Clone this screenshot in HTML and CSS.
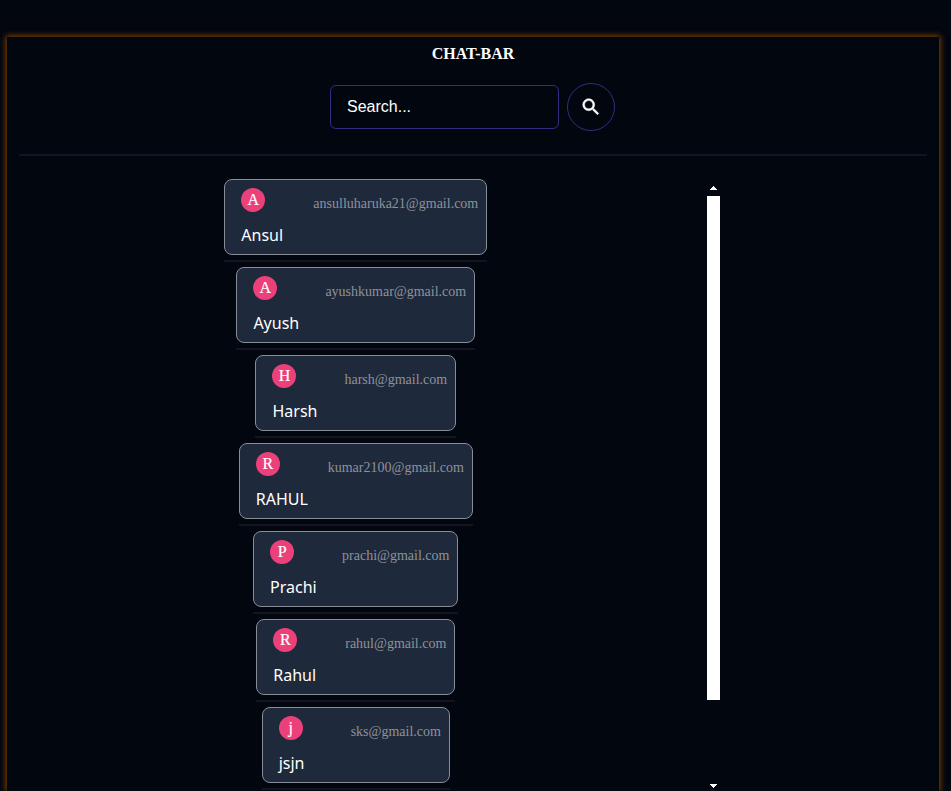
FILE: index.html
```html
<!DOCTYPE html>
<html lang="en">
<head>
<meta charset="utf-8">
<title>Chat-Bar</title>
<link rel="stylesheet" href="styles.css">
</head>
<body>
<main class="panel">
  <h1 class="title">CHAT-BAR</h1>
  <form class="search">
    <input class="search-input" type="text" placeholder="Search..." aria-label="Search">
    <button class="search-button" type="button" aria-label="Search">
      <svg viewBox="0 0 24 24" width="22" height="22" fill="currentColor" stroke="currentColor" stroke-width=".5"><path d="M15.5 14h-.79l-.28-.27C15.41 12.59 16 11.11 16 9.5 16 5.91 13.09 3 9.5 3S3 5.91 3 9.5 5.91 16 9.5 16c1.61 0 3.09-.59 4.23-1.57l.27.28v.79l5 4.99L20.49 19l-4.99-5zm-6 0C7.01 14 5 11.99 5 9.5S7.01 5 9.5 5 14 7.01 14 9.5 11.99 14 9.5 14z"/></svg>
    </button>
  </form>
  <hr class="rule">
  <div class="chats">
    <ul class="list">
      <li class="item"><div class="card"><div class="row"><span class="avatar">A</span><span class="email">ansulluharuka21@gmail.com</span></div><p class="name">Ansul</p></div><hr class="rule"></li>
      <li class="item"><div class="card"><div class="row"><span class="avatar">A</span><span class="email">ayushkumar@gmail.com</span></div><p class="name">Ayush</p></div><hr class="rule"></li>
      <li class="item"><div class="card"><div class="row"><span class="avatar">H</span><span class="email">harsh@gmail.com</span></div><p class="name">Harsh</p></div><hr class="rule"></li>
      <li class="item"><div class="card"><div class="row"><span class="avatar">R</span><span class="email">kumar2100@gmail.com</span></div><p class="name">RAHUL</p></div><hr class="rule"></li>
      <li class="item"><div class="card"><div class="row"><span class="avatar">P</span><span class="email">prachi@gmail.com</span></div><p class="name">Prachi</p></div><hr class="rule"></li>
      <li class="item"><div class="card"><div class="row"><span class="avatar">R</span><span class="email">rahul@gmail.com</span></div><p class="name">Rahul</p></div><hr class="rule"></li>
      <li class="item"><div class="card"><div class="row"><span class="avatar">j</span><span class="email">sks@gmail.com</span></div><p class="name">jsjn</p></div><hr class="rule"></li>
    </ul>
    <div class="scrollbar">
      <svg width="7" height="4" viewBox="0 0 7 4" fill="#fff" shape-rendering="crispEdges"><path d="M3 0h1v1h1v1h1v1h1v1H0V3h1V2h1V1h1z"/></svg>
      <div class="thumb"></div>
      <svg width="7" height="4" viewBox="0 0 7 4" fill="#fff" shape-rendering="crispEdges"><path d="M0 0h7v1H6v1H5v1H4v1H3V3H2V2H1V1H0z"/></svg>
    </div>
  </div>
</main>
</body>
</html>
```
FILE: styles.css
```css
* {
  box-sizing: border-box;
}

html {
  height: 100%;
  overflow: hidden;
}

body {
  height: 100%;
  margin: 0;
  padding: 37px 12px 0 7px;
  overflow: hidden;
  background: #02060f;
  color: #fff;
  font-family: "Liberation Serif", serif;
}

.panel {
  height: 754px;
  padding: 8px 12px 0;
  background: #02060f;
  box-shadow: 0 0 6px 1px #8a4600;
}

.title {
  margin: 0;
  font-size: 16px;
  line-height: 18px;
  text-align: center;
}

.search {
  display: flex;
  justify-content: center;
  align-items: center;
  gap: 8px;
  margin: 20px 1px 23px 0;
}

.search-input {
  width: 229px;
  height: 44px;
  padding: 0 16px;
  border: 1px solid #312e81;
  border-radius: 6px;
  background: transparent;
  font: 16px "Liberation Sans", sans-serif;
}

.search-input::placeholder {
  color: #fff;
}

.search-button {
  display: grid;
  place-items: center;
  width: 48px;
  height: 48px;
  padding: 0;
  border: 1px solid #312e81;
  border-radius: 50%;
  background: transparent;
  color: #fff;
}

.rule {
  height: 2px;
  margin: 0;
  border: 0;
  background: #12151f;
}

.chats {
  display: flex;
  gap: 219.7px;
  margin: 23px 0 0 205.3px;
}

.list {
  display: flex;
  flex-direction: column;
  align-items: center;
  gap: 5px;
  width: 263px;
  margin: 0;
  padding: 0;
  list-style: none;
}

.item {
  display: flex;
  flex-direction: column;
  gap: 5px;
}

.card {
  height: 76px;
  padding: 8px 8px 0 16px;
  border: 1px solid #888d97;
  border-radius: 8px;
  background: #1e293b;
}

.row {
  display: flex;
  gap: 48px;
}

.avatar {
  width: 24px;
  height: 24px;
  border-radius: 50%;
  background: #ec407a;
  font-size: 16px;
  line-height: 24px;
  text-align: center;
  -webkit-text-stroke: 0.2px #fff;
}

.email {
  padding-top: 7px;
  color: #8e929a;
  font-size: 14px;
  line-height: 17px;
}

.name {
  margin: 11px 0 0;
  font: 16px/24px "Noto Sans", sans-serif;
}

.scrollbar {
  display: flex;
  flex-direction: column;
  align-items: center;
  width: 13px;
  padding-top: 7px;
}

.thumb {
  width: 13px;
  height: 504px;
  margin: 6px 0 84px;
  background: #fff;
}
```
